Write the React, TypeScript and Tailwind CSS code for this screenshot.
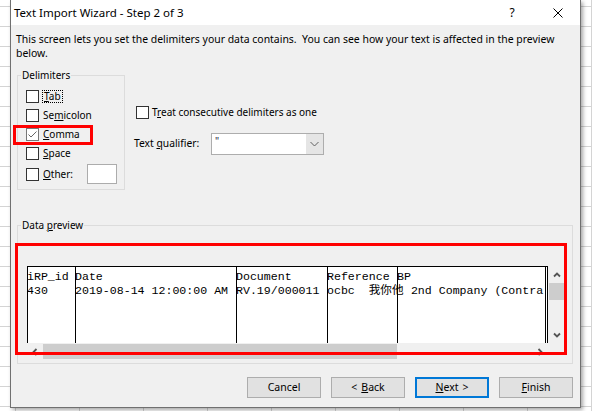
import React from 'react';

type Dir = 'up' | 'down' | 'left' | 'right';

const arrows: Record<Dir, string> = {
  up: 'M1 5.5 L4 2.5 L7 5.5',
  down: 'M1 2.5 L4 5.5 L7 2.5',
  left: 'M5.5 1 L2.5 4 L5.5 7',
  right: 'M2.5 1 L5.5 4 L2.5 7',
};

function Arrow({ dir }: { dir: Dir }) {
  return (
    <svg width="8" height="8" viewBox="0 0 8 8" fill="none">
      <path d={arrows[dir]} stroke="#555" strokeWidth="1.8" />
    </svg>
  );
}

function Check({ on }: { on?: boolean }) {
  if (on) {
    return (
      <span className="flex h-[13px] w-[13px] shrink-0 items-center justify-center border border-[#777] bg-white">
        <svg width="11" height="11" viewBox="0 0 11 11" fill="none">
          <path d="M1.5 5.5 L4 8 L9.5 2.5" stroke="#666" strokeWidth="1" />
        </svg>
      </span>
    );
  }
  return <span className="h-[13px] w-[13px] shrink-0 border border-[#333] bg-white" />;
}

function GroupLabel({ children }: { children: React.ReactNode }) {
  return (
    <span className="absolute left-[3px] top-[-8px] bg-[#f0f0f0] px-[1px] leading-[14px]">{children}</span>
  );
}

function Btn({ children, focus }: { children: React.ReactNode; focus?: boolean }) {
  return (
    <div
      className={
        focus
          ? 'flex h-[21px] w-[74px] items-center justify-center border-2 border-[#0078d7] bg-[#e1e1e1] text-[10.5px]'
          : 'flex h-[21px] w-[74px] items-center justify-center border border-[#adadad] bg-[#e1e1e1] text-[10.5px]'
      }
    >
      {children}
    </div>
  );
}

const header = ['iRP_id', 'Date', 'Document', 'Reference', 'BP'];
const row = ['430', '2019-08-14 12:00:00 AM', 'RV.19/000011', 'ocbc  我你他', '  2nd Company (Contra'];
const widths = ['w-[48px]', 'w-[161px]', 'w-[91px]', 'w-[70px]', 'w-[148px] overflow-hidden'];

export default function App() {
  return (
    <div className="relative h-[411px] w-[592px] overflow-hidden bg-white bg-[linear-gradient(#d4d4d4_1px,transparent_1px),linear-gradient(90deg,#d4d4d4_1px,transparent_1px)] bg-size-[64px_20px] bg-position-[15px_6px] pl-[10px]">
      <div className="flex h-[408px] w-[571px] flex-col border-x border-b border-[#707070] bg-[#f0f0f0] font-['Noto_Sans',sans-serif] text-[10px] text-black shadow-[2px_2px_4px_rgba(0,0,0,0.35)]">
        {/* title bar */}
        <div className="flex h-[25px] shrink-0 items-center bg-white pl-[3px]">
          <span className="text-[11.5px]">Text Import Wizard - Step 2 of 3</span>
          <div className="ml-auto flex h-full">
            <div className="flex w-[46px] items-center justify-center text-[12px]">?</div>
            <div className="flex w-[45px] items-center justify-center">
              <svg width="10" height="10" viewBox="0 0 10 10">
                <path d="M0.5 0.5 L9.5 9.5 M9.5 0.5 L0.5 9.5" stroke="#000" strokeWidth="1" />
              </svg>
            </div>
          </div>
        </div>

        <p className="mt-[7px] pl-[5px] text-[10.45px] leading-[14px]">
          This screen lets you set the delimiters your data contains.&nbsp; You can see how your text is affected in the preview
          <br />
          below.
        </p>

        <div className="mt-[15px] flex items-start">
          {/* delimiters group */}
          <div className="relative ml-[6px] h-[115px] w-[108px] border border-[#dcdcdc] pl-[8px] pr-[7px] pt-[11px]">
            <GroupLabel>Delimiters</GroupLabel>
            <div className="flex h-[19px] items-center">
              <Check />
              <span className="ml-[3px] border border-dotted border-black px-[1px] leading-[11px]">
                <u>T</u>ab
              </span>
            </div>
            <div className="flex h-[19px] items-center">
              <Check />
              <span className="ml-[4px]">
                Se<u>m</u>icolon
              </span>
            </div>
            <div className="flex h-[19px] items-center">
              <Check on />
              <span className="ml-[4px]">
                <u>C</u>omma
              </span>
            </div>
            <div className="flex h-[19px] items-center">
              <Check />
              <span className="ml-[4px]">
                <u>S</u>pace
              </span>
            </div>
            <div className="flex h-[22px] items-center">
              <Check />
              <span className="ml-[4px]">
                <u>O</u>ther:
              </span>
              <span className="ml-auto h-[20px] w-[30px] border border-[#acacac] bg-white" />
            </div>
          </div>

          {/* right options */}
          <div className="ml-[9px] pt-[28px]">
            <div className="flex h-[19px] items-center pl-[2px]">
              <Check />
              <span className="ml-[3px]">
                T<u>r</u>eat consecutive delimiters as one
              </span>
            </div>
            <div className="mt-[11px] flex h-[22px] items-center">
              <span className="w-[77px] text-[10.3px]">
                Text <u>q</u>ualifier:
              </span>
              <div className="flex h-[22px] w-[113px] border border-[#adadad] bg-white">
                <span className="flex-1 pl-[3px] leading-[14px] text-[#1a1a40]">"</span>
                <span className="flex w-[17px] items-center justify-center bg-[#e5e5e5]">
                  <svg width="9" height="6" viewBox="0 0 9 6" fill="none">
                    <path d="M0.5 1 L4.5 5 L8.5 1" stroke="#606060" strokeWidth="1" />
                  </svg>
                </span>
              </div>
            </div>
          </div>
        </div>

        {/* data preview group */}
        <div className="relative ml-[6px] mt-[35px] h-[139px] w-[556px] border border-[#dcdcdc] pl-[8px] pt-[40px]">
          <GroupLabel>
            Data <u>p</u>review
          </GroupLabel>
          <div className="flex w-[540px]">
            <div className="w-[1px]" />
            <div className="flex h-[77px] w-[521px] border-t border-black bg-white font-['Liberation_Mono','Noto_Sans_CJK_SC',monospace] text-[11.6px] leading-[14px]">
              {header.map((h, i) => (
                <div key={h} className={`${widths[i]} h-full shrink-0 border-l border-black pt-[3px] whitespace-pre`}>
                  <div className="-ml-[1px]">{h}</div>
                  <div className="-ml-[1px]">{row[i]}</div>
                </div>
              ))}
              <div className="h-full w-[3px] shrink-0 border-x border-black" />
            </div>
            <div className="flex h-[77px] w-[18px] flex-col">
              <div className="flex h-[17px] items-center justify-center">
                <Arrow dir="up" />
              </div>
              <div className="mx-[1px] h-[17px] bg-[#cdcdcd]" />
              <div className="flex-1" />
              <div className="flex h-[17px] items-center justify-center">
                <Arrow dir="down" />
              </div>
            </div>
          </div>
          <div className="flex h-[17px] w-[540px]">
            <div className="flex w-[522px] items-stretch">
              <div className="flex w-[17px] items-center justify-center">
                <Arrow dir="left" />
              </div>
              <div className="my-[1px] w-[354px] bg-[#cdcdcd]" />
              <div className="flex-1" />
              <div className="flex w-[17px] items-center justify-center">
                <Arrow dir="right" />
              </div>
            </div>
          </div>
        </div>

        <div className="mt-[13px] flex justify-end gap-[10px] pr-[7px]">
          <Btn>Cancel</Btn>
          <Btn>
            <span>{'<'}</span>
            <u className="ml-[4px]">B</u>ack
          </Btn>
          <Btn focus>
            <u>N</u>ext
            <span className="ml-[4px]">{'>'}</span>
          </Btn>
          <Btn>
            <u>F</u>inish
          </Btn>
        </div>
      </div>

      {/* annotation boxes */}
      <div className="absolute left-[13px] top-[125px] h-[20px] w-[80px] border-[3px] border-[#ff0000]" />
      <div className="absolute left-[15px] top-[243px] h-[112px] w-[552px] border-[3px] border-[#ff0000]" />
    </div>
  );
}
